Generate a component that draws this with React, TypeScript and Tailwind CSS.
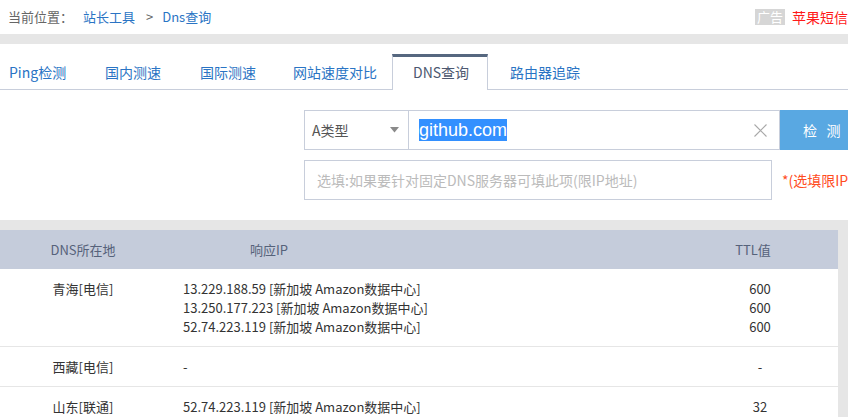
import React from "react";

const font = { fontFamily: '"Noto Sans CJK SC", "Liberation Sans", sans-serif' };

const tabs = [
  { label: "Ping检测", w: "w-[84px]", pl: "pl-[9px]" },
  { label: "国内测速", w: "w-[96px]", pl: "pl-[21px]" },
  { label: "国际测速", w: "w-[93px]", pl: "pl-[20px]" },
  { label: "网站速度对比", w: "w-[119px]", pl: "pl-[20px]" },
  { label: "DNS查询", w: "w-[96px]", pl: "pl-[20px]", active: true },
  { label: "路由器追踪", w: "w-[108px]", pl: "pl-[22px]" },
];

const rows = [
  {
    loc: "青海[电信]",
    ips: [
      "13.229.188.59 [新加坡 Amazon数据中心]",
      "13.250.177.223 [新加坡 Amazon数据中心]",
      "52.74.223.119 [新加坡 Amazon数据中心]",
    ],
    ttl: ["600", "600", "600"],
  },
  { loc: "西藏[电信]", ips: ["-"], ttl: ["-"] },
  { loc: "山东[联通]", ips: ["52.74.223.119 [新加坡 Amazon数据中心]"], ttl: ["32"] },
];

export default function App() {
  return (
    <div className="w-[848px] h-[417px] overflow-hidden bg-[#e6e6e6]" style={font}>
      {/* breadcrumb */}
      <div className="h-[34px] bg-white flex items-center text-[13px] whitespace-nowrap">
        <span className="ml-[8px] text-[#666]">当前位置：</span>
        <span className="ml-[10px] text-[#2a74c4]">站长工具</span>
        <span className="ml-[11px] text-[#666]">&gt;</span>
        <span className="ml-[9px] text-[#2a74c4]">Dns查询</span>
        <div className="ml-auto w-[93px] shrink-0 flex items-center overflow-hidden">
          <span className="shrink-0 bg-[#d6d6d6] text-white text-[13px] leading-[16px] px-[2px] mr-[7px]">广告</span>
          <span className="shrink-0 text-[#ff1a1a] text-[14px]">苹果短信全网群发</span>
        </div>
      </div>

      <div className="h-[10px]" />

      {/* tabs + form */}
      <div className="h-[176px] bg-white pt-[10px] overflow-hidden">
        <div className="flex h-[36px] border-b border-[#c8cedb]">
          {tabs.map((t) =>
            t.active ? (
              <div
                key={t.label}
                className={`${t.w} ${t.pl} h-[36px] -mb-px bg-white border-t-[3px] border-t-[#56677f] border-x border-x-[#c8cedb] flex items-center pb-[2px] text-[14px] text-[#4d5870]`}
              >
                {t.label}
              </div>
            ) : (
              <div
                key={t.label}
                className={`${t.w} ${t.pl} h-[35px] flex items-center pt-[2px] text-[14px] text-[#2a74c4]`}
              >
                {t.label}
              </div>
            )
          )}
        </div>

        <div className="ml-[304px] mt-[20px] flex h-[40px]">
          <div className="w-[476px] shrink-0 flex border border-[#c8cedb]">
            <div className="w-[104px] flex items-center border-r border-[#c8cedb] pl-[7px] pr-[9px] text-[14px] text-[#555]">
              <span>A类型</span>
              <svg className="ml-auto" width="9" height="6" viewBox="0 0 9 6">
                <path d="M0 0H9L4.5 5.5Z" fill="#8a8a8a" />
              </svg>
            </div>
            <div className="flex-1 flex items-center pl-[10px] pr-[12px]">
              <span
                className="bg-[#3390ff] text-white text-[18px] leading-[22px]"
                style={{ fontFamily: '"Liberation Sans", Arial, sans-serif' }}
              >
                github.com
              </span>
              <svg className="ml-auto" width="13" height="13" viewBox="0 0 13 13">
                <path d="M0.5 0.5L12.5 12.5M12.5 0.5L0.5 12.5" stroke="#a8a8a8" strokeWidth="1.1" />
              </svg>
            </div>
          </div>
          <div className="flex-1 bg-[#59a8e2] flex items-center pl-[23px] text-white text-[14px] whitespace-nowrap">
            检&nbsp;&nbsp;&nbsp;测
          </div>
        </div>

        <div className="ml-[304px] mt-[10px] flex items-center h-[40px] whitespace-nowrap overflow-hidden">
          <div className="w-[468px] shrink-0 h-[40px] border border-[#c8cedb] flex items-center pl-[12px] text-[14px] text-[#bbbbbb]">
            选填:如果要针对固定DNS服务器可填此项(限IP地址)
          </div>
          <span className="shrink-0 ml-[10px] text-[14px] text-[#ff4d1f]">*(选填限IP地址)</span>
        </div>
      </div>

      {/* table */}
      <div className="pt-[10px] pr-[10px]">
        <div className="bg-white">
          <div className="flex h-[39px] items-center bg-[#c5ccdb] text-[13px] text-[#56627a]">
            <div className="w-[166px] text-center">DNS所在地</div>
            <div className="flex-1 pl-[84px]">响应IP</div>
            <div className="w-[166px] text-center pr-[4px]">TTL值</div>
          </div>
          {rows.map((r) => (
            <div
              key={r.loc}
              className="flex items-start py-[10px] border-b border-[#e6e6e6] text-[13px] leading-[19px] text-[#333]"
            >
              <div className="w-[166px] text-center">{r.loc}</div>
              <div className="flex-1 pl-[17px] flex flex-col">
                {r.ips.map((ip, i) => (
                  <span key={i}>{ip}</span>
                ))}
              </div>
              <div className="w-[166px] text-center pl-[10px] flex flex-col">
                {r.ttl.map((t, i) => (
                  <span key={i}>{t}</span>
                ))}
              </div>
            </div>
          ))}
        </div>
      </div>
    </div>
  );
}
